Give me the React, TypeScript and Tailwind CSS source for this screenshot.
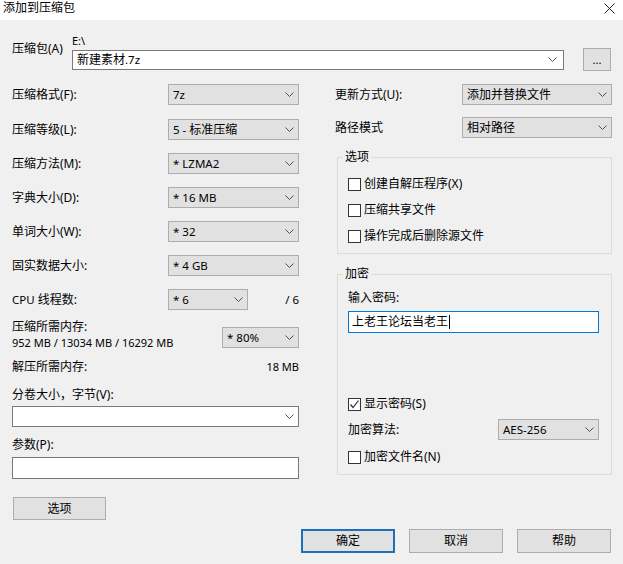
import React from 'react';

function Chevron() {
  return (
    <svg width="9" height="5" viewBox="0 0 9 5" className="shrink-0">
      <path d="M0.5 0.5L4.5 4.5L8.5 0.5" fill="none" stroke="#505050" strokeWidth="1" />
    </svg>
  );
}

// latin runs render a touch smaller, like the dialog font does
function L({ children }: { children: React.ReactNode }) {
  return <span className="text-[11.5px]">{children}</span>;
}

function Select({ value, className }: { value: React.ReactNode; className: string }) {
  return (
    <div className={`flex items-center justify-between h-[21px] bg-[#e1e1e1] border border-[#adadad] pl-[4px] pr-[4px] ${className}`}>
      <span className="leading-[16px] whitespace-pre">{value}</span>
      <Chevron />
    </div>
  );
}

function Checkbox({ label, checked }: { label: React.ReactNode; checked?: boolean }) {
  return (
    <div className="flex items-center h-[16px] gap-[3px]">
      <div className="w-[13px] h-[13px] border border-[#333333] bg-white flex items-center justify-center">
        {checked && (
          <svg width="11" height="11" viewBox="0 0 11 11">
            <path d="M1.5 5.5L4 8.5L9.5 1.5" fill="none" stroke="#333333" strokeWidth="1.2" />
          </svg>
        )}
      </div>
      <span className="leading-[16px]">{label}</span>
    </div>
  );
}

function Button({ label, primary }: { label: string; primary?: boolean }) {
  return (
    <div
      className={
        primary
          ? 'w-[94px] h-[24px] bg-[#e1e1e1] border-2 border-[#1c6fb8] flex items-center justify-center'
          : 'w-[94px] h-[24px] bg-[#e1e1e1] border border-[#adadad] flex items-center justify-center'
      }
    >
      {label}
    </div>
  );
}

const leftRows: [string, React.ReactNode][] = [
  ['压缩格式(F):', <L>7z</L>],
  ['压缩等级(L):', <><L>5 - </L>标准压缩</>],
  ['压缩方法(M):', <L>* LZMA2</L>],
  ['字典大小(D):', <L>* 16 MB</L>],
  ['单词大小(W):', <L>* 32</L>],
  ['固实数据大小:', <L>* 4 GB</L>],
];

export default function App() {
  return (
    <div className="w-[623px] h-[564px] bg-[#f0f0f0] text-[12px] leading-[16px] text-black overflow-hidden font-['Noto_Sans','Noto_Sans_CJK_SC',sans-serif]">
      {/* title bar */}
      <div className="h-[20px] bg-white flex items-start justify-between pl-[3px] pr-[8px]">
        <span className="leading-[16px]">添加到压缩包</span>
        <svg width="11" height="11" viewBox="0 0 11 11" className="mt-[3px]">
          <path d="M0.5 0.5L10.5 10.5M10.5 0.5L0.5 10.5" stroke="#222" strokeWidth="1" />
        </svg>
      </div>

      <div className="pt-[14px] pl-[12px] pr-[11px]">
        {/* archive row */}
        <div className="flex items-start">
          <div className="w-[60px] pt-[7px] leading-[16px]">压缩包(A)</div>
          <div className="flex-1">
            <div className="h-[14px] leading-[14px] text-[11px]">E:\</div>
            <div className="flex items-center">
              <div className="w-[492px] h-[20px] bg-white border border-[#7a7a7a] flex items-center justify-between pl-[4px] pr-[6px]">
                <span className="leading-[16px]">新建素材<L>.7z</L></span>
                <Chevron />
              </div>
              <div className="ml-[19px] w-[28px] h-[23px] bg-[#e1e1e1] border border-[#adadad] flex items-center justify-center text-[11px]">
                ...
              </div>
            </div>
          </div>
        </div>

        <div className="flex mt-[13px]">
          {/* left column */}
          <div className="w-[287px] flex flex-col">
            <div className="flex flex-col gap-[13px]">
              {leftRows.map(([label, value], i) => (
                <div key={i} className={i === 1 ? 'flex items-center justify-between h-[21px] mt-[1px]' : 'flex items-center justify-between h-[21px]'}>
                  <span>{label}</span>
                  <Select value={value} className="w-[131px]" />
                </div>
              ))}
              <div className="flex items-center h-[21px]">
                <span className="w-[156px]"><L>CPU</L> 线程数:</span>
                <Select value={<L>* 6</L>} className="w-[80px]" />
                <span className="flex-1 text-right"><L>/ 6</L></span>
              </div>
            </div>

            <div className="flex justify-between items-start mt-[9px]">
              <div>
                <div>压缩所需内存:</div>
                <div className="text-[11px]">952 MB / 13034 MB / 16292 MB</div>
              </div>
              <Select value={<L>* 80%</L>} className="w-[77px] mt-[8px]" />
            </div>

            <div className="flex justify-between mt-[8px]">
              <span>解压所需内存:</span>
              <span className="text-[11px]">18 MB</span>
            </div>

            <div className="mt-[12px]">分卷大小，字节(V):</div>
            <div className="mt-[3px] h-[21px] bg-white border border-[#7a7a7a] flex items-center justify-end pr-[4px]">
              <Chevron />
            </div>

            <div className="mt-[10px]">参数(P):</div>
            <div className="mt-[4px] h-[22px] bg-white border border-[#7a7a7a]" />

            <div className="mt-[18px] ml-[1px] w-[93px] h-[23px] bg-[#e1e1e1] border border-[#adadad] flex items-center justify-center">
              选项
            </div>
          </div>

          {/* right column */}
          <div className="ml-[36px] w-[277px] flex flex-col">
            <div className="flex items-center justify-between h-[21px]">
              <span>更新方式(U):</span>
              <Select value="添加并替换文件" className="w-[150px]" />
            </div>
            <div className="flex items-center justify-between h-[21px] mt-[12px]">
              <span>路径模式</span>
              <Select value="相对路径" className="w-[150px]" />
            </div>

            <div className="relative mt-[19px] ml-[2px] h-[97px] border border-[#dcdcdc] pl-[10px] pt-[18px] flex flex-col gap-[10px]">
              <span className="absolute -top-[9px] left-[5px] px-[2px] bg-[#f0f0f0]">选项</span>
              <Checkbox label="创建自解压程序(X)" />
              <Checkbox label="压缩共享文件" />
              <Checkbox label="操作完成后删除源文件" />
            </div>

            <div className="relative mt-[20px] ml-[2px] h-[201px] border border-[#dcdcdc] pl-[10px] pr-[12px] pt-[15px] flex flex-col">
              <span className="absolute -top-[9px] left-[5px] px-[2px] bg-[#f0f0f0]">加密</span>
              <div>输入密码:</div>
              <div className="mt-[5px] h-[22px] bg-white border border-[#0078d7] flex items-center pl-[3px]">
                <span>上老王论坛当老王</span>
                <span className="w-[1px] h-[14px] bg-black ml-[1px]" />
              </div>
              <div className="mt-[63px]">
                <Checkbox label="显示密码(S)" checked />
              </div>
              <div className="mt-[7px] flex items-center justify-between h-[21px]">
                <span>加密算法:</span>
                <Select value={<L>AES-256</L>} className="w-[101px]" />
              </div>
              <div className="mt-[9px]">
                <Checkbox label="加密文件名(N)" />
              </div>
            </div>
          </div>
        </div>

        {/* bottom buttons */}
        <div className="flex justify-end gap-[14px] mt-[9px] mr-[1px]">
          <Button label="确定" primary />
          <Button label="取消" />
          <Button label="帮助" />
        </div>
      </div>
    </div>
  );
}
